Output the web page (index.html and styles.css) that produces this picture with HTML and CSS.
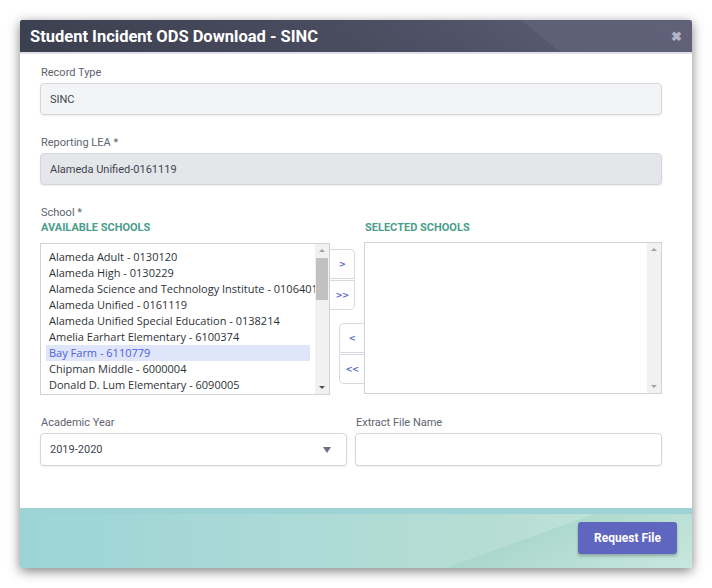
FILE: index.html
```html
<!DOCTYPE html>
<html>
<head>
<meta charset="utf-8">
<link rel="stylesheet" href="styles.css">
</head>
<body>
<div class="modal">
  <div class="modal-header">
    <h1 class="title">Student Incident ODS Download - SINC</h1>
    <span class="close">&#x2716;</span>
  </div>
  <div class="modal-body">
    <div class="field">
      <div class="label">Record Type</div>
      <div class="input readonly">SINC</div>
    </div>
    <div class="field">
      <div class="label">Reporting LEA *</div>
      <div class="input disabled">Alameda Unified-0161119</div>
    </div>
    <div class="field">
      <div class="label">School *</div>
      <div class="dual">
        <div class="list-title">AVAILABLE SCHOOLS</div>
        <div></div>
        <div class="list-title">SELECTED SCHOOLS</div>
        <div class="listbox left">
          <div class="items">
            <div class="item">Alameda Adult - 0130120</div>
            <div class="item">Alameda High - 0130229</div>
            <div class="item">Alameda Science and Technology Institute - 0106401</div>
            <div class="item">Alameda Unified - 0161119</div>
            <div class="item">Alameda Unified Special Education - 0138214</div>
            <div class="item">Amelia Earhart Elementary - 6100374</div>
            <div class="item selected">Bay Farm - 6110779</div>
            <div class="item">Chipman Middle - 6000004</div>
            <div class="item">Donald D. Lum Elementary - 6090005</div>
          </div>
          <div class="scrollbar">
            <span class="arrow up dark"></span>
            <span class="thumb"></span>
            <span class="track-fill"></span>
            <span class="arrow down dark"></span>
          </div>
        </div>
        <div class="mover">
          <div class="btn-group add">
            <div class="move-btn">&gt;</div>
            <div class="move-btn">&gt;&gt;</div>
          </div>
          <div class="btn-group remove">
            <div class="move-btn">&lt;</div>
            <div class="move-btn">&lt;&lt;</div>
          </div>
        </div>
        <div class="listbox right">
          <div class="items"></div>
          <div class="scrollbar">
            <span class="arrow up"></span>
            <span class="track-fill"></span>
            <span class="arrow down"></span>
          </div>
        </div>
      </div>
    </div>
    <div class="row2">
      <div class="field">
        <div class="label">Academic Year</div>
        <div class="input select">2019-2020<span class="caret"></span></div>
      </div>
      <div class="field">
        <div class="label">Extract File Name</div>
        <div class="input text"></div>
      </div>
    </div>
  </div>
  <div class="modal-footer">
    <button class="primary">Request File</button>
  </div>
</div>
</body>
</html>
```

FILE: styles.css
```css
html, body {
  margin: 0;
  padding: 0;
  background: #ffffff;
}
body {
  font-family: Roboto, "Liberation Sans", sans-serif;
  padding: 20px 20px 20px 20px;
}
.modal {
  width: 672px;
  height: 548px;
  display: flex;
  flex-direction: column;
  background: #fff;
  box-shadow: 0 3px 12px rgba(0, 0, 0, 0.5);
  border-radius: 2px;
  overflow: hidden;
}
.modal-header {
  height: 32px;
  flex: none;
  display: flex;
  align-items: center;
  justify-content: space-between;
  padding: 0 10px 0 10px;
  background: linear-gradient(39deg, #3b3f4e 0%, #4a4d60 50%, #55586e 76%, #5e6077 76%, #606179 100%);
  border-bottom: 2px solid #dfdfea;
}
.title {
  margin: 0;
  font-size: 16.5px;
  font-weight: 700;
  color: #ffffff;
  letter-spacing: 0;
}
.close {
  color: #b4b6c4;
  font-size: 12.5px;
  font-weight: 700;
  margin-right: 0;
}
.modal-body {
  flex: 1;
  padding: 12px 30px 0 20px;
  display: flex;
  flex-direction: column;
  gap: 21px;
}
.field {
  display: flex;
  flex-direction: column;
}
.label {
  font-size: 11px;
  line-height: 14px;
  color: #5d6470;
  padding-left: 1px;
  margin-bottom: 3px;
}
.input {
  height: 32px;
  box-sizing: border-box;
  border: 1px solid #d3d7dd;
  border-radius: 4px;
  padding: 0 9px;
  display: flex;
  align-items: center;
  font-size: 11px;
  color: #3f4550;
  box-shadow: 0 1px 2px rgba(0, 0, 0, 0.08);
}
.readonly { background: #f3f4f6; }
.disabled { background: #e4e6e9; }
.select, .text {
  height: 33px;
  background: #fff;
  justify-content: space-between;
}
.caret {
  width: 0;
  height: 0;
  border-left: 4px solid transparent;
  border-right: 4px solid transparent;
  border-top: 6px solid #6b7180;
  margin-right: 6px;
}
.dual {
  display: grid;
  grid-template-columns: 290px 34px 298px;
  grid-template-rows: auto auto;
  margin-top: -2px;
}
.list-title {
  font-size: 11px;
  line-height: 14px;
  font-weight: 700;
  color: #4b9d8c;
  padding-left: 1px;
  margin-bottom: 8px;
}
.listbox {
  display: flex;
  border: 1px solid #cfd3d8;
  box-sizing: border-box;
  height: 152px;
  background: #fff;
  overflow: hidden;
}
.listbox.right {
  margin-top: -1px;
  height: 152px;
}
.items {
  flex: 1;
  padding: 5px 5px 0 5px;
  overflow: hidden;
  font-family: "Open Sans", "Liberation Sans", sans-serif;
  font-size: 11px;
  color: #2e3238;
}
.item {
  height: 16px;
  line-height: 16px;
  padding-left: 3px;
  white-space: nowrap;
}
.item.selected {
  background: #dfe5fb;
  color: #4a62de;
}
.scrollbar {
  width: 14px;
  flex: none;
  background: #f1f1f1;
  display: flex;
  flex-direction: column;
  align-items: center;
}
.arrow {
  width: 0;
  height: 0;
  border-left: 3px solid transparent;
  border-right: 3px solid transparent;
  flex: none;
}
.arrow.up {
  border-bottom: 3px solid #a3a3a3;
  margin: 5px 0 6px;
}
.arrow.down {
  border-top: 3px solid #a3a3a3;
  margin: 6px 0 5px;
}
.arrow.up.dark { border-bottom-color: #a3a3a3; }
.arrow.down.dark { border-top-color: #505050; }
.thumb {
  width: 12px;
  height: 42px;
  background: #c1c1c1;
  flex: none;
}
.track-fill { flex: 1; }
.mover {
  display: flex;
  flex-direction: column;
}
.btn-group {
  display: flex;
  flex-direction: column;
  width: 25px;
}
.btn-group.add {
  margin-top: 6px;
  align-self: flex-start;
}
.btn-group.remove {
  margin-top: 13px;
  align-self: flex-end;
}
.move-btn {
  height: 30px;
  box-sizing: border-box;
  border: 1px solid #d6d9df;
  display: flex;
  align-items: center;
  justify-content: center;
  font-family: "DejaVu Sans", sans-serif;
  font-size: 8.5px;
  font-weight: 700;
  color: #5a67d3;
  background: #fff;
  letter-spacing: -0.5px;
}
.add .move-btn { border-left: none; }
.remove .move-btn { border-right: none; }
.add .move-btn:first-child { border-radius: 0 5px 0 0; }
.add .move-btn:last-child { border-radius: 0 0 5px 0; margin-top: 1px; }
.remove .move-btn:first-child { border-radius: 5px 0 0 0; }
.remove .move-btn:last-child { border-radius: 0 0 0 5px; margin-top: 1px; }
.row2 {
  display: grid;
  grid-template-columns: 307px 307px;
  gap: 8px;
}
.modal-footer {
  height: 60px;
  flex: none;
  box-sizing: border-box;
  display: flex;
  justify-content: flex-end;
  align-items: center;
  padding: 0 15px 0 0;
  border-top: 6px solid #9ed3d6;
  background:
    linear-gradient(160deg, rgba(255,255,255,0) 0%, rgba(255,255,255,0) 70%, rgba(160,210,196,0.5) 70%, rgba(200,232,222,0.6) 100%),
    linear-gradient(90deg, #9cd4d6 0%, #acdad7 40%, #b6ddd3 70%, #c6e6dd 100%);
}
.primary {
  width: 99px;
  height: 32px;
  margin-top: -6px;
  border: none;
  border-radius: 3px;
  background: #5f66bf;
  color: #fff;
  font-family: Roboto, "Liberation Sans", sans-serif;
  font-weight: 700;
  font-size: 12px;
  box-shadow: 0 2px 3px rgba(0, 0, 0, 0.25);
}
```
